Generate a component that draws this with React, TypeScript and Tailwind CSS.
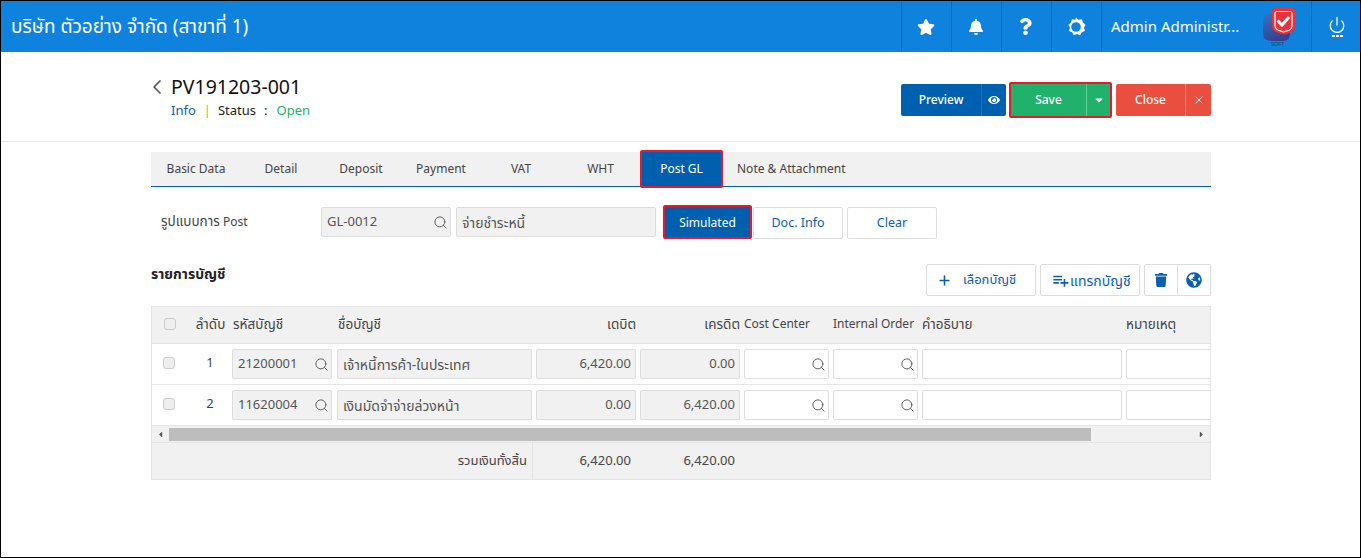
import React from "react";
import { Search, X, Plus, ChevronLeft, Power } from "lucide-react";
import { FaStar, FaBell, FaQuestion, FaEye, FaTrash, FaGlobeAmericas, FaCaretDown, FaCaretLeft, FaCaretRight } from "react-icons/fa";
import { MdPlaylistAdd } from "react-icons/md";

const font = { fontFamily: '"Noto Sans", "Noto Sans Thai", "Liberation Sans", sans-serif' };

function Gear() {
  return (
    <svg width="20" height="20" viewBox="0 0 20 20">
      <path d="M10 0.5l2.6 2.2 3.4-.4.8 3.3 2.7 2.1-1.5 3 .9 3.3-3.2 1.2-1.6 3-3.1-1.3-3.2 1.3-1.6-3-3.2-1.2.9-3.3-1.5-3 2.7-2.1.8-3.3 3.4.4z" fill="#fff" />
      <circle cx="10" cy="10" r="4.800" fill="#0f82de" />
    </svg>
  );
}

function Logo() {
  return (
    <svg width="38" height="40" viewBox="0 0 38 40">
      <defs>
        <linearGradient id="lg" x1="0" y1="0" x2="0.4" y2="1">
          <stop offset="0" stopColor="#2f74c8" />
          <stop offset="1" stopColor="#39418f" />
        </linearGradient>
      </defs>
      <path d="M6 7h22v20q0 6-6 7H10q-9 0-9-8V12q0-5 5-5z" fill="url(#lg)" />
      <path d="M13 1h17q3 0 3 3v15q0 5-5 7l-6 1.500-6-1.500q-6-2-6-7V4q0-3 3-3z" fill="#e8323c" />
      <path d="M15 4.500h13q2 0 2 2v12q0 3.500-3.500 5l-5 1.300-4.500-1.300q-4-1.500-4-5v-12q0-2 2-2z" fill="none" stroke="#fff" strokeWidth="1.200" />
      <path d="M15.500 13.500l4.500 4.500 7-8" fill="none" stroke="#fff" strokeWidth="3" />
      <text x="9" y="38.500" fontSize="5" fill="#1c3f78" fontFamily="Liberation Sans">SOFT</text>
    </svg>
  );
}

const HeadIcon = ({ children }: { children: React.ReactNode }) => (
  <div className="w-[50px] h-full flex items-center justify-center pr-[2px] border-l border-[#0a6cbd] text-white">{children}</div>
);

const tabs = [
  ["Basic Data", 90],
  ["Detail", 80],
  ["Deposit", 80],
  ["Payment", 80],
  ["VAT", 80],
  ["WHT", 79],
];

const SearchIcon = () => <Search size={15} strokeWidth={1.500} className="text-[#555] shrink-0" />;

function GrayInput({ w, children, icon, right, thai }: { w: string; children?: React.ReactNode; icon?: boolean; right?: boolean; thai?: boolean }) {
  return (
    <div className={`${w} h-[30px] shrink-0 bg-[#f1f1f1] border border-[#ddd] rounded-[2px] flex items-center pl-[5px] ${thai ? "text-[14px]" : "text-[13px]"} text-[#555] whitespace-nowrap ${right ? "justify-end pr-[4px]" : icon ? "justify-between pr-[2px]" : "justify-between pr-[5px]"}`}>
      <span>{children}</span>
      {icon && <SearchIcon />}
    </div>
  );
}

function WhiteInput({ w, icon }: { w: string; icon?: boolean }) {
  return (
    <div className={`${w} h-[30px] shrink-0 bg-white border border-[#ddd] rounded-[2px] flex items-center justify-end pr-[2px]`}>
      {icon && <SearchIcon />}
    </div>
  );
}

const Check = () => <div className="w-[12px] h-[12px] rounded-[3px] border border-[#ccc] bg-[#eee]" />;

function Row({ n, code, name, dr, cr }: { n: string; code: string; name: string; dr: string; cr: string }) {
  return (
    <div className="h-[41px] shrink-0 border-b border-[#e5e5e5] flex items-center bg-white">
      <div className="w-[36px] shrink-0 flex justify-center pr-[2px] mb-[2px]"><Check /></div>
      <div className="w-[44px] shrink-0 text-center text-[13px] text-[#444] mb-[2px]">{n}</div>
      <div className="flex gap-[4px] items-center">
        <GrayInput w="w-[100px] mr-[1px]" icon>{code}</GrayInput>
        <GrayInput w="w-[195px]" thai>{name}</GrayInput>
        <GrayInput w="w-[100px]" right>{dr}</GrayInput>
        <GrayInput w="w-[100px]" right>{cr}</GrayInput>
        <WhiteInput w="w-[85px]" icon />
        <WhiteInput w="w-[85px]" icon />
        <WhiteInput w="w-[200px]" />
        <WhiteInput w="w-[100px]" />
      </div>
    </div>
  );
}

export default function App() {
  return (
    <div style={font} className="w-[1361px] h-[558px] border border-black bg-white flex flex-col overflow-hidden text-[#333]">
      <header className="h-[51px] shrink-0 bg-[#0f82de] flex items-center text-white">
        <div className="pl-[10px] text-[19px] flex-1">บริษัท ตัวอย่าง จำกัด (สาขาที่ 1)</div>
        <div className="flex h-full items-center">
          <HeadIcon><FaStar size={18} /></HeadIcon>
          <HeadIcon><FaBell size={16} /></HeadIcon>
          <HeadIcon><FaQuestion size={17} /></HeadIcon>
          <HeadIcon><Gear /></HeadIcon>
          <div className="w-[160px] h-full border-l border-[#0a6cbd] pl-[9px] flex items-center text-[15px] whitespace-nowrap">Admin Administr...</div>
          <div className="w-[50px] h-full flex items-center pl-[1px] pt-[1px]"><Logo /></div>
          <div className="w-[49px] h-full border-l border-[#0a6cbd] flex flex-col items-center justify-center pl-[2px]">
            <Power size={18} strokeWidth={1.700} />
            <div className="flex gap-[1px] mt-[1px]">
              <span className="w-[3px] h-[2px] bg-white" /><span className="w-[3px] h-[2px] bg-white" /><span className="w-[3px] h-[2px] bg-white" />
            </div>
          </div>
        </div>
      </header>

      <section className="h-[90px] shrink-0 border-b border-[#e5e5e5] pl-[150px] pr-[149px] flex justify-between items-center">
        <div className="flex items-start self-start mt-[22px]">
          <ChevronLeft size={24} strokeWidth={1.700} className="text-[#555] mt-[1px] mr-[2px] -ml-[6px]" />
          <div>
            <div className="text-[19.500px] leading-[26px] text-[#111]">PV191203-001</div>
            <div className="text-[13px] leading-[20px] flex">
              <span className="text-[#0b63b0]">Info</span>
              <span className="text-[#f0a000] ml-[8px] mr-[7px]">|</span>
              <span className="text-[#222]">Status</span>
              <span className="text-[#222] ml-[8px] mr-[9px]">:</span>
              <span className="text-[#22b06a]">Open</span>
            </div>
          </div>
        </div>
        <div className="flex items-center mt-[6px]">
          <div className="flex h-[32px] text-white text-[12px] font-medium">
            <div className="w-[80px] pt-[1px] bg-[#0060b0] rounded-l-[2px] flex items-center justify-center">Preview</div>
            <div className="w-[25px] bg-[#0060b0] border-l border-[#0a77d0] rounded-r-[2px] flex items-center justify-center"><FaEye size={12} /></div>
          </div>
          <div className="flex h-[36px] ml-[3px] border-[2px] border-[#e8192c] rounded-[2px] text-white text-[12px] font-medium">
            <div className="w-[75px] pt-[1px] bg-[#20b16c] flex items-center justify-center">Save</div>
            <div className="w-[24px] bg-[#20b16c] border-l border-[#5fcf98] flex items-center justify-center"><FaCaretDown size={12} /></div>
          </div>
          <div className="flex h-[32px] ml-[4px] text-white text-[12px] font-medium">
            <div className="w-[69px] pt-[1px] bg-[#e94e3e] rounded-l-[2px] flex items-center justify-center">Close</div>
            <div className="w-[26px] bg-[#e94e3e] border-l border-[#f58a7e] rounded-r-[2px] flex items-center justify-center"><X size={12} /></div>
          </div>
        </div>
      </section>

      <main className="ml-[150px] w-[1060px] pt-[10px]">
        <nav className="h-[35px] bg-[#f1f1f1] border-b border-[#0a5ea6] flex items-center text-[12px] text-[#444]">
          {tabs.map(([t, w]) => (
            <div key={t as string} style={{ width: w as number }} className="text-center shrink-0">{t}</div>
          ))}
          <div className="w-[83px] h-[38px] shrink-0 bg-[#0060b0] border-[2px] border-[#e8192c] rounded-[2px] text-white flex items-center justify-center">Post GL</div>
          <div className="pl-[14px] whitespace-nowrap">Note &amp; Attachment</div>
        </nav>

        <div className="flex items-start h-[34px] mt-[18px]">
          <div className="w-[170px] pl-[10px] text-[12px] text-[#444] shrink-0 leading-[30px] mt-[2px] -translate-y-[1px]"><span className="text-[13.500px]">รูปแบบการ</span> Post</div>
          <div className="flex gap-[5px] mt-[2px]">
            <GrayInput w="w-[130px]" icon>GL-0012</GrayInput>
            <GrayInput w="w-[200px]" thai>จ่ายชำระหนี้</GrayInput>
          </div>
          <div className="w-[89px] h-[34px] ml-[7px] pt-[2px] bg-[#0060b0] border-[2px] border-[#e8192c] rounded-[2px] text-white text-[12px] flex items-center justify-center">Simulated</div>
          <div className="w-[90px] h-[32px] ml-[1px] mt-[2px] pt-[1px] border border-[#ddd] rounded-[2px] text-[#0b5eb0] text-[12.500px] flex items-center justify-center">Doc. Info</div>
          <div className="w-[90px] h-[32px] ml-[4px] mt-[2px] pt-[1px] border border-[#ddd] rounded-[2px] text-[#0b5eb0] text-[12.500px] flex items-center justify-center">Clear</div>
        </div>

        <div className="flex justify-between items-start mt-[25px]">
          <div className="text-[14px] font-bold text-[#222] -mt-[1px]">รายการบัญชี</div>
          <div className="flex text-[#0b5eb0] text-[13px]">
            <div className="w-[110px] h-[32px] border border-[#ddd] rounded-[2px] flex items-center pl-[10px]"><Plus size={15} strokeWidth={2.500} /><span className="ml-[11px]">เลือกบัญชี</span></div>
            <div className="w-[100px] h-[32px] ml-[4px] border border-[#ddd] rounded-[2px] flex items-center pl-[10px] text-[14px] whitespace-nowrap"><MdPlaylistAdd size={19} className="shrink-0" /><span>แทรกบัญชี</span></div>
            <div className="w-[34px] h-[32px] ml-[4px] border border-[#ddd] rounded-l-[2px] flex items-center justify-center"><FaTrash size={14} /></div>
            <div className="w-[33px] h-[32px] border border-l-0 border-[#ddd] rounded-r-[2px] flex items-center justify-center"><FaGlobeAmericas size={16} /></div>
          </div>
        </div>

        <div className="mt-[10px] h-[174px] border border-[#e5e5e5] flex flex-col overflow-hidden">
          <div className="h-[37px] shrink-0 pb-[2px] bg-[#f1f1f1] border-b border-[#e5e5e5] flex items-center text-[13.500px] text-[#444] whitespace-nowrap">
            <div className="w-[36px] shrink-0 flex justify-center"><Check /></div>
            <div className="w-[45px] shrink-0 text-center">ลำดับ</div>
            <div className="w-[105px] shrink-0">รหัสบัญชี</div>
            <div className="w-[199px] shrink-0">ชื่อบัญชี</div>
            <div className="w-[99px] shrink-0 text-right">เดบิต</div>
            <div className="w-[104px] shrink-0 text-right">เครดิต</div>
            <div className="w-[89px] shrink-0 pl-[4px] text-[12px]">Cost Center</div>
            <div className="w-[89px] shrink-0 pl-[4px] text-[12px]">Internal Order</div>
            <div className="w-[204px] shrink-0 pl-[4px]">คำอธิบาย</div>
            <div className="pl-[4px]">หมายเหตุ</div>
          </div>
          <Row n="1" code="21200001" name="เจ้าหนี้การค้า-ในประเทศ" dr="6,420.00" cr="0.00" />
          <Row n="2" code="11620004" name="เงินมัดจำจ่ายล่วงหน้า" dr="0.00" cr="6,420.00" />
          <div className="h-[17px] shrink-0 bg-[#f1f1f1] border-b border-[#e5e5e5] flex items-center text-[#555]">
            <FaCaretLeft size={9} className="w-[17px] shrink-0" />
            <div className="w-[922px] h-[13px] bg-[#bdbdbd] shrink-0" />
            <div className="flex-1" />
            <FaCaretRight size={9} className="w-[17px] shrink-0" />
          </div>
          <div className="flex-1 bg-[#f1f1f1] flex text-[13px] text-[#444]">
            <div className="w-[381px] shrink-0 border-r border-[#e5e5e5] flex items-center justify-end pr-[5px]">รวมเงินทั้งสิ้น</div>
            <div className="w-[98px] shrink-0 flex items-center justify-end">6,420.00</div>
            <div className="w-[104px] shrink-0 flex items-center justify-end">6,420.00</div>
          </div>
        </div>
      </main>
    </div>
  );
}
